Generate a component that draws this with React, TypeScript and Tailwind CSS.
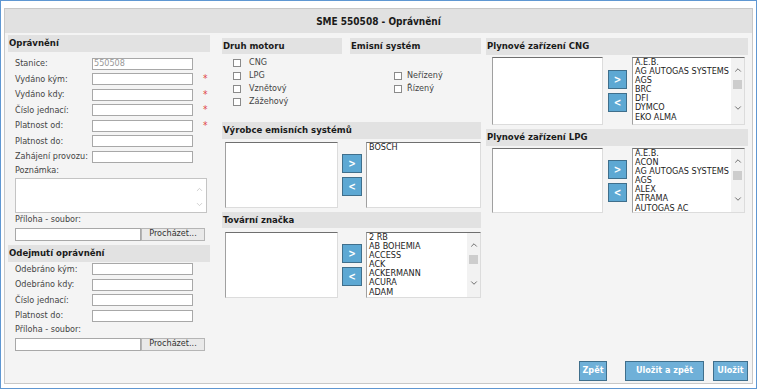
import { ChevronDown, ChevronUp } from "lucide-react";

const cngItems = ["A.E.B.", "AG AUTOGAS SYSTEMS", "AGS", "BRC", "DFI", "DYMCO", "EKO ALMA"];
const lpgItems = ["A.E.B.", "ACON", "AG AUTOGAS SYSTEMS", "AGS", "ALEX", "ATRAMA", "AUTOGAS AC"];
const brandItems = ["2 RB", "AB BOHEMIA", "ACCESS", "ACK", "ACKERMANN", "ACURA", "ADAM"];

function Header({ title, className = "" }: { title: string; className?: string }) {
  return (
    <div className={`flex items-center bg-[#e2e2e2] pl-[1px] text-[9.5px] font-bold whitespace-nowrap text-[#1a1a1a] ${className}`}>
      {title}
    </div>
  );
}

function Row({ label, value, required }: { label: string; value?: string; required?: boolean }) {
  return (
    <div className="flex h-[15.5px] items-center">
      <span className="w-[84px] pl-[7px] text-[9px] whitespace-nowrap text-[#444]">{label}</span>
      <div className="flex h-[12px] w-[101px] items-center border border-[#a8a8a8] bg-white pl-[1px] text-[9px] text-[#999]">
        {value}
      </div>
      {required && <span className="ml-[10px] text-[10px] leading-none text-[#e04444]">*</span>}
    </div>
  );
}

function FileRow() {
  return (
    <div className="ml-[7px] flex h-[13px]">
      <div className="w-[126px] border border-[#a8a8a8] bg-white" />
      <div className="flex w-[64px] items-center justify-center border border-[#b5b5b5] bg-[#e9e9e9] text-[9px] text-[#333]">
        Procházet...
      </div>
    </div>
  );
}

function Check({ label, boxGap }: { label?: string; boxGap: string }) {
  return (
    <div className="flex h-[13px] items-center">
      {label && (
        <>
          <div className="h-[8px] w-[8px] border border-[#8a8a8a] bg-white" />
          <span className={`${boxGap} text-[9px] text-[#444]`}>{label}</span>
        </>
      )}
    </div>
  );
}

function Scrollbar() {
  return (
    <div className="absolute top-0 right-0 bottom-0 flex w-[13px] flex-col items-center bg-[#f2f2f2]">
      <ChevronUp size={10} strokeWidth={2} className="mt-[7px] text-[#555]" />
      <div className="mt-[5px] h-[9px] w-[9px] bg-[#cdcdcd]" />
      <ChevronDown size={10} strokeWidth={2} className="mt-[14px] text-[#555]" />
    </div>
  );
}

function MoveButtons({ width }: { width: string }) {
  return (
    <div className={`flex flex-col justify-center gap-[4px] ${width}`}>
      <div className="flex h-[19px] items-center justify-center border border-[#3f6f8c] bg-[#5da8d3] text-[10px] font-bold text-white">
        &gt;
      </div>
      <div className="flex h-[19px] items-center justify-center border border-[#3f6f8c] bg-[#5da8d3] text-[10px] font-bold text-white">
        &lt;
      </div>
    </div>
  );
}

function ListItems({ items, scroll }: { items: string[]; scroll?: boolean }) {
  return (
    <>
      <div className="pl-[2px] text-[9px] leading-[9.1px] text-[#222]">
        {items.map((item) => (
          <div key={item} className="whitespace-nowrap">
            {item}
          </div>
        ))}
      </div>
      {scroll && <Scrollbar />}
    </>
  );
}

const boxCls = "relative overflow-hidden border border-[#dcdcdc] border-t-[#6f6f6f] border-l-[#a0a0a0] bg-white";

export default function App() {
  return (
    <div className="h-[389px] w-[757px] border border-[#5f97d2] bg-white px-[3px] pt-[7px] pb-[4px] font-[family-name:'DejaVu_Sans_Condensed','Liberation_Sans',sans-serif]">
      <div className="flex h-full flex-col border border-[#c8c8c8] bg-[#f4f4f4]">
        <div className="flex h-[24px] items-center justify-center bg-[#e1e1e1] text-[10px] font-bold text-[#1a1a1a]">
          SME 550508 - Oprávnění
        </div>

        <div className="flex px-[3px] pt-[2px]">
          {/* left column */}
          <div className="w-[202px]">
            <Header title="Oprávnění" className="h-[17px]" />
            <div className="mt-[4px]">
              <Row label="Stanice:" value="550508" />
              <Row label="Vydáno kým:" required />
              <Row label="Vydáno kdy:" required />
              <Row label="Číslo jednací:" required />
              <Row label="Platnost od:" required />
              <Row label="Platnost do:" />
              <Row label="Zahájení provozu:" />
            </div>
            <div className="flex h-[12px] items-center pl-[7px] text-[9px] text-[#444]">Poznámka:</div>
            <div className="relative mt-[1px] ml-[7px] h-[35px] w-[192px] border border-[#c4c4c4] bg-white">
              <ChevronUp size={9} strokeWidth={2} className="absolute top-[6px] right-[2px] text-[#c2c2c2]" />
              <ChevronDown size={9} strokeWidth={2} className="absolute top-[21px] right-[2px] text-[#c2c2c2]" />
            </div>
            <div className="flex h-[14px] items-center pl-[7px] text-[9px] text-[#444]">Příloha - soubor:</div>
            <div className="mt-[1px]">
              <FileRow />
            </div>

            <Header title="Odejmutí oprávnění" className="mt-[4px] h-[17px]" />
            <div>
              <Row label="Odebráno kým:" />
              <Row label="Odebráno kdy:" />
              <Row label="Číslo jednací:" />
              <Row label="Platnost do:" />
            </div>
            <div className="mt-[1px] flex h-[11px] items-center pl-[7px] text-[9px] text-[#444]">Příloha - soubor:</div>
            <div className="mt-[2px]">
              <FileRow />
            </div>
          </div>

          {/* middle column */}
          <div className="mt-[3px] ml-[12px] w-[259px]">
            <div className="flex">
              <div className="w-[120px]">
                <Header title="Druh motoru" className="h-[16px]" />
                <div className="mt-[2px] pl-[11px]">
                  <Check label="CNG" boxGap="ml-[8px]" />
                  <Check label="LPG" boxGap="ml-[8px]" />
                  <Check label="Vznětový" boxGap="ml-[8px]" />
                  <Check label="Zážehový" boxGap="ml-[8px]" />
                </div>
              </div>
              <div className="ml-[8px] flex-1">
                <Header title="Emisní systém" className="h-[16px]" />
                <div className="mt-[2px] pl-[44px]">
                  <Check boxGap="" />
                  <Check label="Neřízený" boxGap="ml-[5px]" />
                  <Check label="Řízený" boxGap="ml-[5px]" />
                </div>
              </div>
            </div>

            <Header title="Výrobce emisních systémů" className="mt-[14px] h-[17px]" />
            <div className="mt-[3px] flex h-[66px]">
              <div className={`${boxCls} ml-[3px] w-[113px]`} />
              <div className="ml-[4px] flex">
                <MoveButtons width="w-[20px]" />
              </div>
              <div className={`${boxCls} ml-[4px] w-[115px]`}>
                <ListItems items={["BOSCH"]} />
              </div>
            </div>

            <Header title="Tovární značka" className="mt-[4px] h-[16px]" />
            <div className="mt-[4px] flex h-[66px]">
              <div className={`${boxCls} ml-[3px] w-[113px]`} />
              <div className="ml-[4px] flex">
                <MoveButtons width="w-[20px]" />
              </div>
              <div className={`${boxCls} ml-[4px] w-[115px]`}>
                <ListItems items={brandItems} scroll />
              </div>
            </div>
          </div>

          {/* right column */}
          <div className="mt-[3px] ml-[5px] w-[262px]">
            <Header title="Plynové zařízení CNG" className="h-[17px]" />
            <div className="mt-[2px] flex h-[68px]">
              <div className={`${boxCls} ml-[6px] w-[111px]`} />
              <div className="ml-[5px] flex">
                <MoveButtons width="w-[19px]" />
              </div>
              <div className={`${boxCls} ml-[5px] w-[113px]`}>
                <ListItems items={cngItems} scroll />
              </div>
            </div>

            <Header title="Plynové zařízení LPG" className="mt-[4px] h-[17px]" />
            <div className="mt-[2px] flex h-[65px]">
              <div className={`${boxCls} ml-[6px] w-[111px]`} />
              <div className="ml-[5px] flex">
                <MoveButtons width="w-[19px]" />
              </div>
              <div className={`${boxCls} ml-[5px] w-[113px]`}>
                <ListItems items={lpgItems} scroll />
              </div>
            </div>
          </div>
        </div>

        <div className="mt-auto flex justify-end pr-[4px] pb-[2px]">
          <div className="mr-[18px] flex h-[20px] w-[28px] items-center justify-center border border-[#3f6f8c] bg-[#6fb0d8] text-[9px] font-bold text-white">
            Zpět
          </div>
          <div className="mr-[9px] flex h-[20px] w-[79px] items-center justify-center border border-[#3f6f8c] bg-[#6fb0d8] text-[9px] font-bold text-white">
            Uložit a zpět
          </div>
          <div className="flex h-[20px] w-[35px] items-center justify-center border border-[#3f6f8c] bg-[#6fb0d8] text-[9px] font-bold text-white">
            Uložit
          </div>
        </div>
      </div>
    </div>
  );
}
